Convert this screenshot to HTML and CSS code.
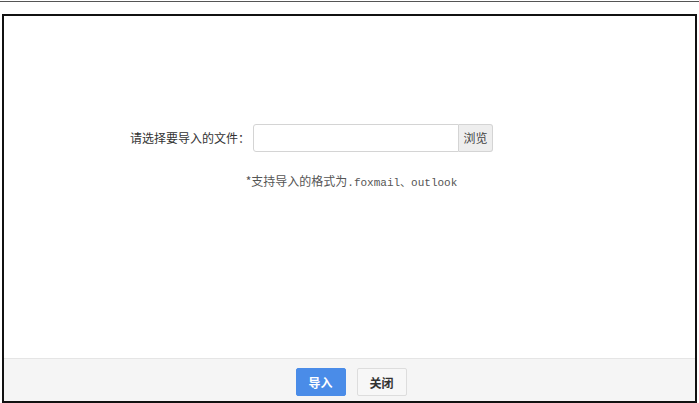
FILE: index.html
```html
<!DOCTYPE html>
<html>
<head>
<meta charset="utf-8">
<link rel="stylesheet" href="styles.css">
</head>
<body>
<div class="topline"></div>
<div class="dialog">
  <div class="content">
    <div class="row">
      <span class="label">请选择要导入的文件：</span>
      <div class="file">
        <div class="field"></div>
        <div class="browse">浏览</div>
      </div>
    </div>
    <div class="hint">*支持导入的格式为<span class="mono">.foxmail、outlook</span></div>
  </div>
  <div class="footer">
    <button class="btn primary">导入</button>
    <button class="btn">关闭</button>
  </div>
</div>
</body>
</html>
```
FILE: styles.css
```css
html, body {
  margin: 0;
  padding: 0;
  background: #fff;
  font-family: "Noto Sans CJK SC", "Liberation Sans", sans-serif;
  font-size: 12px;
  color: #333;
}
.topline {
  margin-top: 1px;
  height: 1px;
  background: #555;
}
.dialog {
  margin: 12px 2px 0 2px;
  height: 385px;
  border: 2px solid #111;
  display: flex;
  flex-direction: column;
}
.content {
  flex: 1;
  display: flex;
  flex-direction: column;
}
.row {
  display: flex;
  align-items: center;
  margin-top: 108px;
  margin-left: 126px;
}
.label {
  width: 123px;
  line-height: 28px;
  color: #333;
}
.file {
  display: flex;
  height: 28px;
}
.field {
  width: 204px;
  height: 26px;
  border: 1px solid #d4d4d4;
  border-radius: 3px 0 0 3px;
  background: #fff;
}
.browse {
  width: 33px;
  height: 26px;
  line-height: 26px;
  border: 1px solid #d4d4d4;
  border-left: none;
  border-radius: 0 3px 3px 0;
  background: #eee;
  text-align: center;
  color: #444;
}
.hint {
  margin-top: 21px;
  padding-left: 4px;
  text-align: center;
  color: #555;
  line-height: 16px;
}
.mono {
  font-family: "Liberation Mono", "Noto Sans CJK SC", monospace;
  font-size: 11px;
}
.footer {
  height: 42px;
  box-sizing: border-box;
  height: 43px;
  padding: 4px 0 0 3px;
  border-top: 1px solid #e5e5e5;
  background: #f5f5f5;
  display: flex;
  justify-content: center;
  align-items: center;
  gap: 11px;
}
.btn {
  width: 50px;
  height: 28px;
  border: 1px solid #ddd;
  border-radius: 2px;
  background: #f7f7f7;
  font-family: "Noto Sans CJK SC", sans-serif;
  font-size: 12px;
  font-weight: bold;
  color: #333;
  padding: 0;
}
.btn.primary {
  background: #4a8ce8;
  border-color: #4a8ce8;
  color: #fff;
}
```
